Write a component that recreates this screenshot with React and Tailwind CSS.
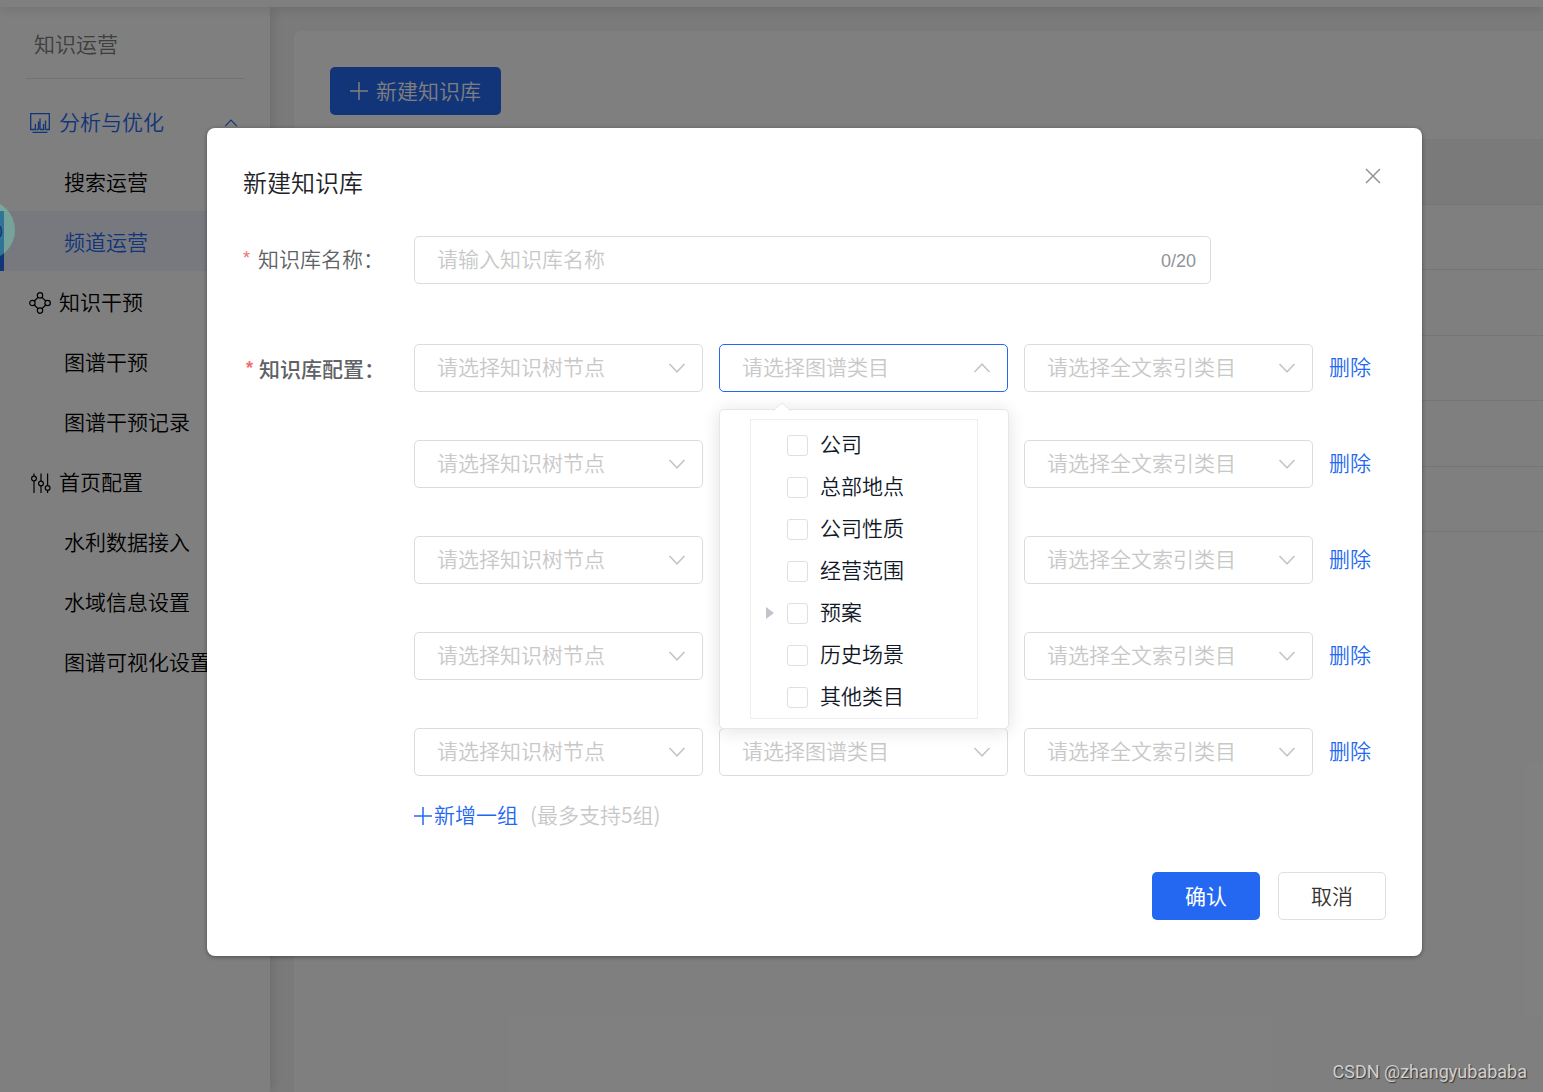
import React, { useState } from 'react';

const menu = [
    { title: '分析与优化', icon: 'chart', current: true, children: ['搜索运营', '频道运营'] },
    { title: '知识干预', icon: 'nodes', children: ['图谱干预', '图谱干预记录'] },
    { title: '首页配置', icon: 'sliders', children: ['水利数据接入', '水域信息设置', '图谱可视化设置'] },
];

const categories = [
    { name: '公司' },
    { name: '总部地点' },
    { name: '公司性质' },
    { name: '经营范围' },
    { name: '预案', expandable: true },
    { name: '历史场景' },
    { name: '其他类目' },
];

const Chevron = ({ up, className }) => (
    <svg viewBox="0 0 18 10" fill="none" stroke="currentColor" strokeWidth="1.5" className={className} aria-hidden="true">
        <path d={up ? 'M1.5 9 9 1.2 16.5 9' : 'M1.5 1 9 8.8 16.5 1'} />
    </svg>
);

const Plus = ({ className }) => (
    <svg viewBox="0 0 18 18" fill="none" stroke="currentColor" strokeWidth="1.5" className={className} aria-hidden="true">
        <path d="M9 0v18M0 9h18" />
    </svg>
);

const MenuIcon = ({ name }) => {
    if (name === 'chart') {
        return (
            <svg viewBox="0 0 22 22" fill="none" stroke="currentColor" strokeWidth="1.3" className="h-[22px] w-[22px]" aria-hidden="true">
                <path d="M3.5 17.5H1.7V1.7h18.6v15.8h-1.8M3.5 17.5h2.9V12M9.5 17.5h-2M9.5 17.5V9.5M11 17.5V6.5M11 17.5h4.5M14.5 17.5V12M16.5 17.5V8.5M16.5 17.5h2M3.5 20.4h15" />
            </svg>
        );
    }
    if (name === 'nodes') {
        return (
            <svg viewBox="0 0 22 22" fill="none" stroke="currentColor" strokeWidth="1.2" className="h-[22px] w-[22px]" aria-hidden="true">
                <circle cx="11" cy="3.4" r="2.7" />
                <circle cx="11" cy="18.6" r="2.7" />
                <circle cx="3.4" cy="11" r="2.7" />
                <circle cx="18.6" cy="11" r="2.7" />
                <path d="M9 5.3 5.3 9M13 5.3 16.7 9M9 16.7 5.3 13M13 16.7l3.7-3.7" />
            </svg>
        );
    }
    return (
        <svg viewBox="0 0 22 22" fill="none" stroke="currentColor" strokeWidth="1.2" className="h-[22px] w-[22px]" aria-hidden="true">
            <circle cx="5" cy="6.5" r="2.4" />
            <circle cx="12" cy="11.5" r="2.4" />
            <circle cx="18.6" cy="16" r="2.4" />
            <path d="M5 1.5v2.6M5 8.9v12M12 1.5v7.6M12 13.9v7M18.6 1.5v12.1M18.6 18.4v2.5" />
        </svg>
    );
};

const Sidebar = () => (
    <aside className="relative w-[270px] shrink-0 bg-white shadow-[2px_0_12px_rgba(0,0,0,0.12)]">
        <h2 className="mx-[26px] flex h-18 items-center border-b border-[#e4e4e4] pl-2 text-[21px] text-[#7c7c7c]">
            知识运营
        </h2>
        <nav className="mt-3">
            {menu.map((group) => (
                <div key={group.title}>
                    <button
                        type="button"
                        className={`flex h-[60px] w-full items-center gap-2 pl-[29px] pr-8 pt-1 ${group.current ? 'text-[#2468f2]' : 'text-black'}`}
                    >
                        <MenuIcon name={group.icon} />
                        <span className="pb-1">{group.title}</span>
                        {group.current && <Chevron up className="ml-auto h-2 w-[14px]" />}
                    </button>
                    {group.children.map((item) => (
                        <a
                            key={item}
                            href="#"
                            className={`flex h-[60px] items-center border-l-4 pl-[60px] ${item === '频道运营' ? 'border-[#2468f2] bg-[#eff3ff] text-[#2468f2]' : 'border-transparent text-black'}`}
                        >
                            {item}
                        </a>
                    ))}
                </div>
            ))}
        </nav>
    </aside>
);

const Background = () => (
    <div className="flex min-h-screen flex-col bg-[#f5f5f5]">
        <header className="relative z-10 h-[7px] bg-white shadow-[0_2px_12px_rgba(0,0,0,0.15)]" />
        <div className="flex flex-1">
            <Sidebar />
            <main className="flex-1 pl-6 pt-6">
                <div className="h-full rounded-tl-lg bg-white pl-9 pt-9">
                    <button type="button" className="flex h-12 items-center gap-2 rounded-[5px] bg-[#2468f2] px-5 text-white">
                        <Plus className="h-[18px] w-[18px]" />
                        <span className="pb-[2px]">新建知识库</span>
                    </button>
                    <div className="mt-6">
                        <div className="h-[66px] border-b border-[#e8e8e8] bg-[#f5f5f5]" />
                        {[1, 2, 3, 4, 5].map((n) => (
                            <div key={n} className="h-[65px] border-b border-[#ebebeb] odd:h-[66px]" />
                        ))}
                    </div>
                </div>
            </main>
        </div>
    </div>
);

const Select = ({ label, open, onToggle, children }) => (
    <div className="relative flex-1">
        <select
            aria-label={label}
            onMouseDown={onToggle && ((e) => { e.preventDefault(); onToggle(); })}
            className={`h-12 w-full appearance-none rounded-[5px] border bg-white pb-1 pl-[22px] pr-10 text-[#c8c8c8] outline-none ${open ? 'border-[#2468f2]' : 'border-[#dcdcdc]'}`}
        >
            <option>{label}</option>
        </select>
        <Chevron up={open} className="pointer-events-none absolute right-[17px] top-[19px] h-[10px] w-[18px] text-[#c0c4cc]" />
        {children}
    </div>
);

const CategoryTree = () => (
    <div className="absolute left-0 top-full z-10 mt-[17px] w-[290px] rounded-[5px] border border-[#e4e7ed] bg-white px-[30px] py-[9px] shadow-[0_2px_18px_rgba(0,0,0,0.12)]">
        <svg viewBox="0 0 18 9" className="absolute -top-[8px] left-[53px] h-[9px] w-[18px]" aria-hidden="true">
            <path d="M0 9 9 1l9 8" fill="#fff" stroke="#e4e7ed" />
        </svg>
        <ul className="border border-[#ebeef0] pt-1">
            {categories.map((item) => (
                <li key={item.name} className="flex h-[42px] items-center pl-[15px]">
                    <span className="flex w-[21px]">
                        {item.expandable && (
                            <svg viewBox="0 0 8 12" className="h-3 w-2 text-[#c0c4cc]" aria-hidden="true">
                                <path d="M0 0 8 6 0 12Z" fill="currentColor" />
                            </svg>
                        )}
                    </span>
                    <label className="flex items-center gap-3 text-[#111827]">
                        <input type="checkbox" className="h-[21px] w-[21px] appearance-none rounded-[3px] border border-[#dcdfe6] bg-white checked:bg-[#2468f2]" />
                        <span className="pb-1">{item.name}</span>
                    </label>
                </li>
            ))}
        </ul>
    </div>
);

const CreateDialog = () => {
    const [name, setName] = useState('');
    const [openRow, setOpenRow] = useState(0);
    const [rows, setRows] = useState([1, 2, 3, 4, 5]);

    const addRow = () => {
        if (rows.length < 5) setRows([...rows, Math.max(0, ...rows) + 1]);
    };

    return (
        <div role="dialog" aria-labelledby="dialog-title" className="flex-1 rounded-lg bg-white px-9 pb-9 pt-8 shadow-[0_1px_4px_rgba(0,0,0,0.4)]">
            <div className="flex items-start justify-between">
                <h1 id="dialog-title" className="text-2xl leading-[44px] text-[#1f2329]">新建知识库</h1>
                <button type="button" aria-label="关闭" className="p-[5px] pt-2 text-[#909399]">
                    <svg viewBox="0 0 16 16" fill="none" stroke="currentColor" strokeWidth="1.5" className="h-4 w-4">
                        <path d="M1 1l14 14M15 1 1 15" />
                    </svg>
                </button>
            </div>

            <div className="mt-8 flex items-center">
                <label htmlFor="kb-name" className="w-[171px] pb-1 text-[#606266]">
                    <span className="mr-2 align-[3px] font-['Liberation_Sans'] text-[18px] leading-none text-[#f56c6c]">*</span>
                    知识库名称：
                </label>
                <div className="relative mr-[175px] flex-1">
                    <input
                        id="kb-name"
                        type="text"
                        maxLength={20}
                        placeholder="请输入知识库名称"
                        value={name}
                        onChange={(e) => setName(e.target.value)}
                        className="h-12 w-full rounded-[5px] border border-[#dcdcdc] pb-1 pl-[22px] pr-16 outline-none placeholder:text-[#c8c8c8]"
                    />
                    <span className="absolute right-[15px] top-[13px] font-['Liberation_Sans'] text-[18px] leading-6 text-[#909399]">
                        {name.length}/20
                    </span>
                </div>
            </div>

            <div className="mt-[60px] flex">
                <div className="w-[171px] shrink-0 pl-[3px] pt-[2px] font-medium leading-[44px] text-[#606266]">
                    <span className="mr-[6px] align-[3px] font-['Liberation_Sans'] text-[18px] font-bold leading-none text-[#f56c6c]">*</span>
                    知识库配置：
                </div>
                <div className="flex-1">
                    <div className="space-y-12">
                        {rows.map((row, i) => (
                            <div key={row} className="flex items-center gap-4 pr-[15px]">
                                <Select label="请选择知识树节点" />
                                <Select
                                    label="请选择图谱类目"
                                    open={openRow === i}
                                    onToggle={() => setOpenRow(openRow === i ? -1 : i)}
                                >
                                    {openRow === i && <CategoryTree />}
                                </Select>
                                <Select label="请选择全文索引类目" />
                                <button type="button" className="pb-1 text-[#2468f2]" onClick={() => setRows(rows.filter((r) => r !== row))}>
                                    删除
                                </button>
                            </div>
                        ))}
                    </div>
                    <div className="mt-6 flex h-8 items-center gap-3">
                        <button type="button" onClick={addRow} className="flex items-center text-[#2468f2]">
                            <Plus className="mr-[2px] h-[18px] w-[18px]" />
                            <span className="pb-1">新增一组</span>
                        </button>
                        <span className="pb-1 text-[#c8c8c8]">(最多支持5组)</span>
                    </div>
                </div>
            </div>

            <div className="mt-10 flex justify-end gap-[18px]">
                <button type="button" className="h-12 w-[108px] rounded-[5px] bg-[#2468f2] pb-[2px] font-normal text-white">确认</button>
                <button type="button" className="h-12 w-[108px] rounded-[5px] border border-[#dcdfe6] bg-white pb-[2px] text-[#333]">取消</button>
            </div>
        </div>
    );
};

const App = () => (
    <div className="relative min-h-screen overflow-hidden font-['Noto_Sans_CJK_SC',sans-serif] text-[21px] font-[350] leading-8">
        <Background />
        <div className="absolute inset-0 z-20 flex items-start bg-black/50 pl-[207px] pr-[121px] pt-32">
            <CreateDialog />
        </div>
        {/* floating helper bubble docked to the left edge */}
        <div className="absolute -left-[45px] top-[200px] z-30 flex h-[60px] w-[60px] items-center justify-end rounded-full bg-[#73fdd4]/32 pr-3">
            <span className="text-[18px] text-[#12357a]">0</span>
        </div>
        <p className="absolute bottom-1 right-4 z-30 font-['Roboto',sans-serif] text-[18px] font-normal text-[#d0d0d0] [text-shadow:1px_1px_1px_#333]">
            CSDN @zhangyubababa
        </p>
    </div>
);

export default App;
